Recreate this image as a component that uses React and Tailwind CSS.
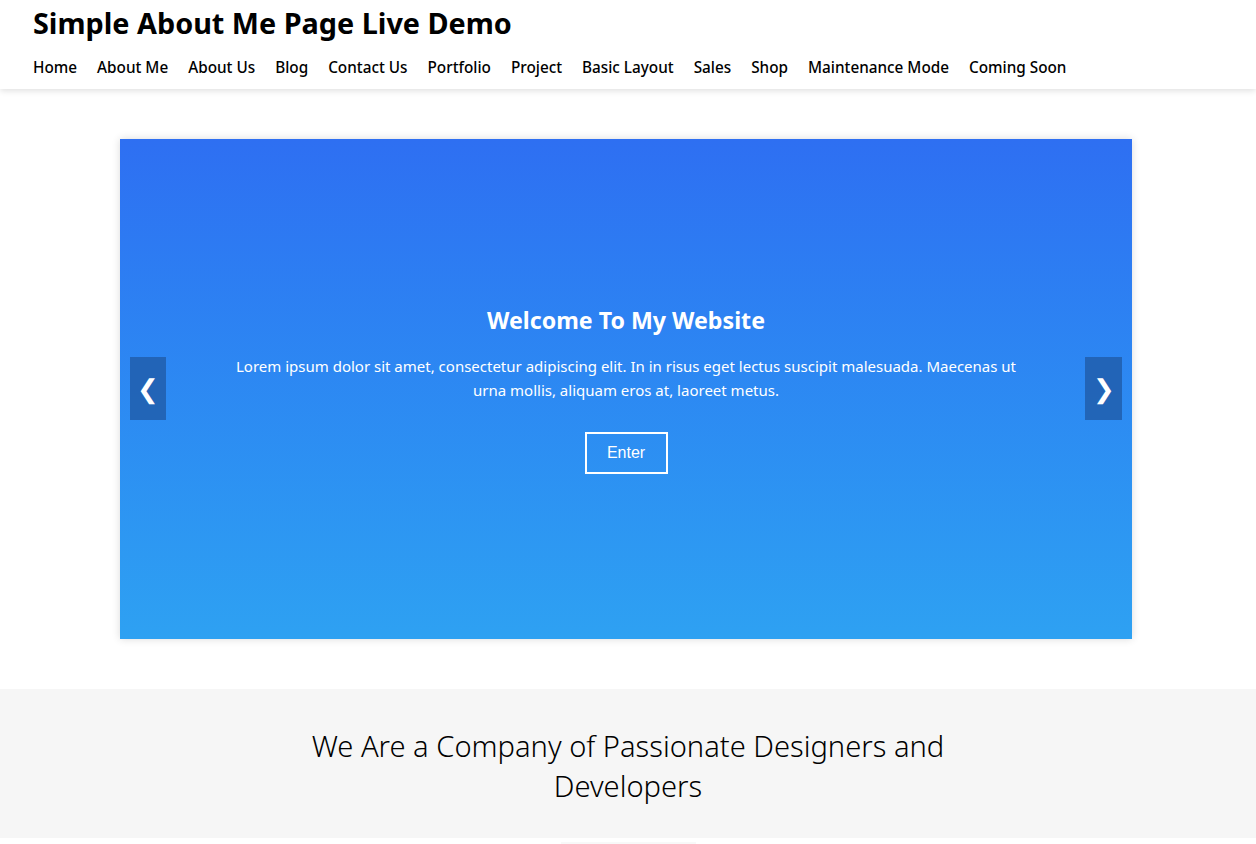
import React from "react";

const navLinks = [
  "Home",
  "About Me",
  "About Us",
  "Blog",
  "Contact Us",
  "Portfolio",
  "Project",
  "Basic Layout",
  "Sales",
  "Shop",
  "Maintenance Mode",
  "Coming Soon",
];

const App = () => {
  return (
    <div className="min-h-screen bg-white font-['Noto_Sans',sans-serif] text-black">
      {/* header */}
      <header className="h-[89px] bg-white px-[33px] shadow-[0_2px_6px_rgba(0,0,0,0.12)] relative z-10">
        <h1 className="pt-[4px] text-[28.8px] font-bold leading-[38px]">
          Simple About Me Page Live Demo
        </h1>
        <nav className="mt-[15px] flex gap-[20px] text-[15.3px] font-medium leading-[20px]">
          {navLinks.map((link) => (
            <a key={link} href="#" className="text-black">
              {link}
            </a>
          ))}
        </nav>
      </header>

      {/* slider */}
      <div className="pl-[120px] pr-[124px] pt-[50px] pb-[50px]">
        <div className="relative flex h-[500px] flex-col items-center justify-center bg-gradient-to-b from-[#2e6ff2] to-[#2ea1f2] text-center text-white shadow-[0_0_8px_rgba(0,0,0,0.15)]">
          <h2 className="text-[23.2px] font-bold leading-[30px]">
            Welcome To My Website
          </h2>
          <p className="mt-[19px] max-w-[800px] text-[15px] leading-[24px]">
            Lorem ipsum dolor sit amet, consectetur adipiscing elit. In in
            risus eget lectus suscipit malesuada. Maecenas ut urna mollis,
            aliquam eros at, laoreet metus.
          </p>
          <button className="mt-[30px] h-[42px] w-[83px] border-2 border-white font-['Liberation_Sans',sans-serif] text-[16px] text-white">
            Enter
          </button>

          <button className="absolute left-[10px] top-[218px] flex h-[63px] w-[36px] items-center justify-center bg-[#2160b0]/90 text-[26px] text-white">
            ❮
          </button>
          <button className="absolute right-[10px] top-[218px] flex h-[63px] w-[37px] items-center justify-center bg-[#2160b0]/90 text-[26px] text-white">
            ❯
          </button>
        </div>
      </div>

      {/* about section */}
      <section className="bg-[#f6f6f6] pt-[37px] pb-[32px]">
        <h3 className="mx-auto max-w-[680px] text-center text-[29.1px] font-light leading-[40px]">
          We Are a Company of Passionate Designers and Developers
        </h3>
      </section>
      <div className="flex justify-center">
        <div className="mt-[4px] h-[2px] w-[135px] bg-[#f8f8f8]" />
      </div>
    </div>
  );
};

export default App;
